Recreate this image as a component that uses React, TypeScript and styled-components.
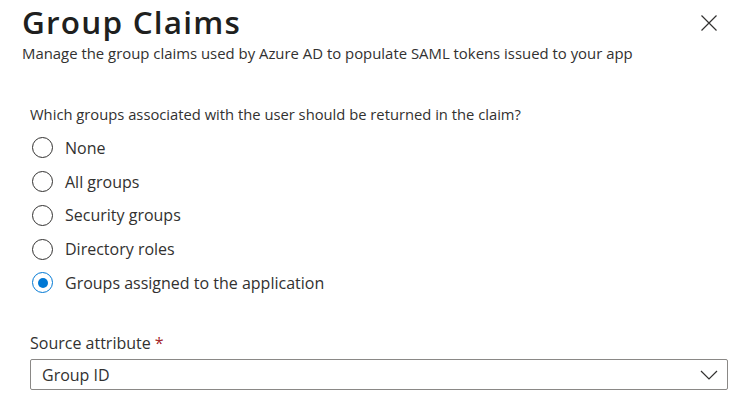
import styled, { createGlobalStyle } from "styled-components";
import { useState } from "react";

const GlobalStyle = createGlobalStyle`
  html, body {
    margin: 0;
    padding: 0;
    background: #ffffff;
  }
  body {
    font-family: "Open Sans", "Noto Sans", sans-serif;
    color: #323130;
  }
`;

const Panel = styled.div`
  width: 754px;
  height: 417px;
  box-sizing: border-box;
  padding: 3px 26px 0 22px;
  overflow: hidden;
`;

const Header = styled.header`
  display: flex;
  justify-content: space-between;
  align-items: flex-start;
`;

const Title = styled.h1`
  margin: 0;
  font-size: 31.5px;
  font-weight: 600;
  line-height: 38px;
  letter-spacing: 1.2px;
  color: #201f1e;
`;

const Subtitle = styled.p`
  margin: 2px 0 0;
  font-size: 14.9px;
  line-height: 20px;
  color: #323130;
`;

const CloseButton = styled.button`
  border: none;
  background: none;
  padding: 0;
  margin: 11px 10px 0 0;
  width: 18px;
  height: 18px;
  cursor: pointer;
  color: #323130;
`;

const Body = styled.div`
  padding-left: 8px;
  margin-top: 41px;
`;

const Question = styled.p`
  margin: 0 0 7px;
  font-size: 14.75px;
  line-height: 20px;
`;

const RadioList = styled.div`
  display: flex;
  flex-direction: column;
`;

const RadioRow = styled.label`
  display: flex;
  align-items: center;
  height: 33.75px;
  gap: 12px;
  font-size: 16px;
  cursor: pointer;
`;

const RadioCircle = styled.span<{ $checked: boolean }>`
  box-sizing: border-box;
  width: 21px;
  height: 21px;
  margin-left: 2px;
  border-radius: 50%;
  border: 1.5px solid ${(p) => (p.$checked ? "#0078d4" : "#323130")};
  display: flex;
  align-items: center;
  justify-content: center;

  &::after {
    content: "";
    width: 10px;
    height: 10px;
    border-radius: 50%;
    background: ${(p) => (p.$checked ? "#0078d4" : "transparent")};
  }
`;

const Field = styled.div`
  margin-top: 32px;
`;

const Label = styled.div`
  font-size: 16px;
  line-height: 22px;
  margin-bottom: 5px;

  > span {
    color: #a4262c;
    margin-left: 4px;
  }
`;

const Select = styled.div`
  box-sizing: border-box;
  height: 31.5px;
  border: 1px solid #8a8886;
  border-radius: 2px;
  display: flex;
  align-items: center;
  justify-content: space-between;
  padding: 0 9px 0 11px;
  font-size: 16px;
`;

const options = [
  "None",
  "All groups",
  "Security groups",
  "Directory roles",
  "Groups assigned to the application",
];

const App = () => {
  const [selected, setSelected] = useState(4);

  return (
    <>
      <GlobalStyle />
      <Panel>
        <Header>
          <div>
            <Title>Group Claims</Title>
            <Subtitle>
              Manage the group claims used by Azure AD to populate SAML tokens issued to your app
            </Subtitle>
          </div>
          <CloseButton aria-label="Close">
            <svg width="18" height="18" viewBox="0 0 18 18" fill="none" stroke="currentColor" strokeWidth="1.2">
              <path d="M1.5 1.5 L16.5 16.5 M16.5 1.5 L1.5 16.5" />
            </svg>
          </CloseButton>
        </Header>
        <Body>
          <Question>Which groups associated with the user should be returned in the claim?</Question>
          <RadioList>
            {options.map((opt, i) => (
              <RadioRow key={opt} onClick={() => setSelected(i)}>
                <RadioCircle $checked={selected === i} />
                {opt}
              </RadioRow>
            ))}
          </RadioList>
          <Field>
            <Label>
              Source attribute<span>*</span>
            </Label>
            <Select>
              Group ID
              <svg width="18" height="10" viewBox="0 0 18 10" fill="none" stroke="#323130" strokeWidth="1.2">
                <path d="M1 1 L9 9 L17 1" />
              </svg>
            </Select>
          </Field>
        </Body>
      </Panel>
    </>
  );
};

export default App;
